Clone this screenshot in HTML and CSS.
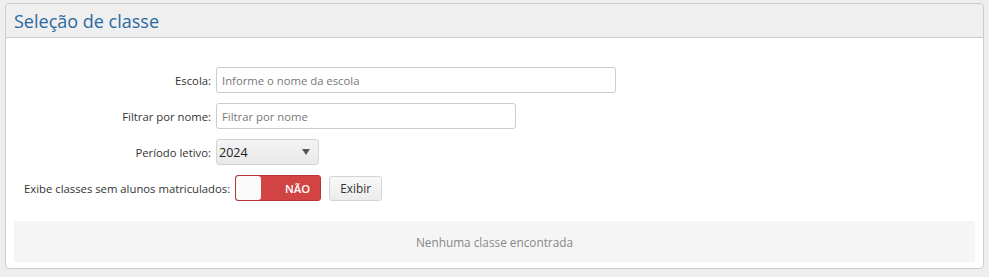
FILE: index.html
```html
<!DOCTYPE html>
<html>
<head>
    <meta charset="UTF-8">
    <link rel="stylesheet" href="styles.css">
</head>
<body>
    <div class="panel">
        <div class="panel-heading">
            <h3>Seleção de classe</h3>
        </div>
        <div class="panel-body">
            <div class="form-row">
                <label class="form-label">Escola:</label>
                <input type="text" class="form-input input-wide" placeholder="Informe o nome da escola">
            </div>
            <div class="form-row">
                <label class="form-label">Filtrar por nome:</label>
                <input type="text" class="form-input input-medium" placeholder="Filtrar por nome">
            </div>
            <div class="form-row">
                <label class="form-label">Período letivo:</label>
                <div class="select-box">
                    <span>2024</span>
                    <span class="caret"></span>
                </div>
            </div>
            <div class="form-row row-toggle">
                <label class="toggle-label">Exibe classes sem alunos matriculados:</label>
                <div class="toggle">
                    <span class="toggle-knob"></span>
                    <span class="toggle-text">NÃO</span>
                </div>
                <button class="btn">Exibir</button>
            </div>

            <div class="empty-box">Nenhuma classe encontrada</div>
        </div>
    </div>
</body>
</html>
```

FILE: styles.css
```css
body {
    margin: 0;
    padding: 3px 5px 0 5px;
    background-color: #eeeeee;
    font-family: "Open Sans", "Noto Sans", sans-serif;
    font-size: 11.3px;
    color: #333;
}

.panel {
    background: #fff;
    border: 1px solid #cccccc;
    border-radius: 4px;
    height: 266px;
    box-sizing: border-box;
}

.panel-heading {
    background: #efefef;
    border-bottom: 1px solid #cccccc;
    border-radius: 4px 4px 0 0;
    height: 34px;
    box-sizing: border-box;
    padding: 4px 8px 0 8px;
}

.panel-heading h3 {
    margin: 0;
    font-size: 18px;
    font-weight: normal;
    color: #2a6aa0;
    line-height: 26px;
}

.panel-body {
    padding: 29px 8px 0 8px;
}

.form-row {
    display: flex;
    align-items: center;
    height: 26px;
    margin-bottom: 10px;
}

.form-label {
    width: 197px;
    text-align: right;
    margin-right: 5px;
}

.form-input {
    height: 26px;
    box-sizing: border-box;
    border: 1px solid #cccccc;
    border-radius: 3px;
    padding: 0 5px;
    font-family: inherit;
    font-size: 11.3px;
    color: #333;
    outline: none;
}

.form-input::placeholder {
    color: #777;
}

.input-wide {
    width: 400px;
}

.input-medium {
    width: 300px;
}

.select-box {
    width: 103px;
    height: 26px;
    box-sizing: border-box;
    border: 1px solid #d4d4d4;
    border-radius: 3px;
    background: linear-gradient(#f4f4f4, #e9e9e9);
    display: flex;
    align-items: center;
    justify-content: space-between;
    padding: 0 8px 0 2px;
    font-size: 12.5px;
    color: #222;
}

.caret {
    width: 0;
    height: 0;
    border-left: 4px solid transparent;
    border-right: 4px solid transparent;
    border-top: 6px solid #555;
}

.row-toggle {
    padding-left: 10px;
}

.toggle-label {
    margin-right: 5px;
}

.toggle {
    width: 86px;
    height: 26px;
    box-sizing: border-box;
    background: #d24343;
    border: 1px solid #b93535;
    border-radius: 3px;
    display: flex;
    align-items: center;
    justify-content: space-between;
    padding-right: 10px;
}

.toggle-knob {
    width: 25px;
    height: 24px;
    background: #fafafa;
    border-radius: 3px;
}

.toggle-text {
    color: #fff;
    font-size: 11.3px;
    font-weight: 600;
}

.btn {
    margin-left: 8px;
    height: 25px;
    width: 53px;
    border: 1px solid #d4d4d4;
    border-radius: 3px;
    background: linear-gradient(#f8f8f8, #ececec);
    font-family: inherit;
    font-size: 11.8px;
    color: #333;
    padding: 0;
}

.empty-box {
    margin-top: 20px;
    background: #f5f5f5;
    height: 41px;
    display: flex;
    align-items: center;
    justify-content: center;
    color: #888;
    font-size: 11.8px;
}
```
